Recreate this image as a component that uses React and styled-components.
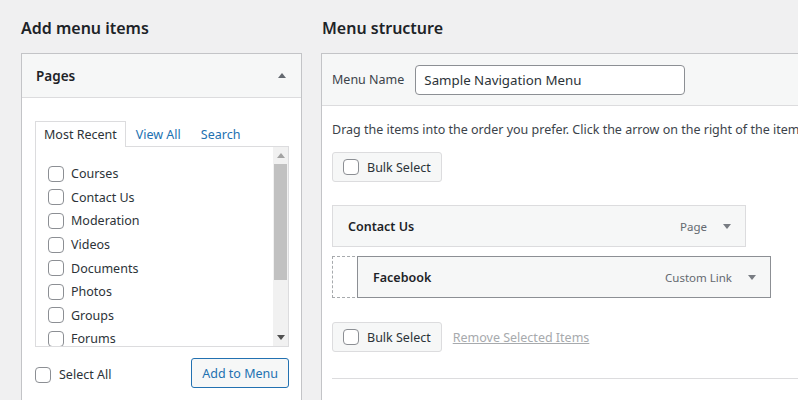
import styled, { createGlobalStyle } from 'styled-components';

const font = '"Noto Sans", "Open Sans", Arial, sans-serif';

const GlobalStyle = createGlobalStyle`
  html, body {
    margin: 0;
    background: #f0f0f1;
    overflow: hidden;
  }

  body {
    font-family: ${font};
    font-size: 12.5px;
    color: #3c434a;
  }

  #root {
    width: 1200px;
  }
`;

const Page = styled.div`
  display: flex;
  align-items: flex-start;
  gap: 19px;
  padding: 16px 0 0 21px;
`;

const Column = styled.section`
  width: ${(p) => p.width};
  flex-shrink: 0;
`;

const Heading = styled.h2`
  margin: 0 0 13px ${(p) => p.indent || '0'};
  font-size: 16px;
  line-height: 24px;
  font-weight: 600;
  color: #1d2327;
`;

const Box = styled.div`
  background: #fff;
  border: 1px solid #c3c4c7;
  height: ${(p) => p.height};
`;

const BoxHeader = styled.div`
  display: flex;
  align-items: center;
  justify-content: ${(p) => p.justify || 'space-between'};
  height: ${(p) => p.height};
  padding: 0 ${(p) => p.padRight} 0 ${(p) => p.padLeft};
  background: #f6f7f7;
  border-bottom: 1px solid #dcdcde;
`;

const BoxTitle = styled.h3`
  margin: 0;
  font-size: 13.5px;
  font-weight: 600;
  color: #1d2327;
`;

const Triangle = styled.span`
  width: 0;
  height: 0;
  border-left: ${(p) => p.size}px solid transparent;
  border-right: ${(p) => p.size}px solid transparent;
  ${(p) => (p.up ? 'border-bottom' : 'border-top')}: ${(p) => p.size + 1}px solid ${(p) => p.color || '#787c82'};
`;

const BoxBody = styled.div`
  padding: 23px 12px 0 13px;
`;

const Tabs = styled.div`
  display: flex;
  height: 25px;
`;

const Tab = styled.a`
  position: relative;
  z-index: 1;
  display: flex;
  align-items: center;
  margin-bottom: -1px;
  padding: 0 ${(p) => (p.active ? '8px' : '9px')};
  font-size: 12.5px;
  text-decoration: none;
  color: ${(p) => (p.active ? '#2c3338' : '#2271b1')};
  background: ${(p) => (p.active ? '#fff' : 'transparent')};
  border: 1px solid ${(p) => (p.active ? '#dcdcde' : 'transparent')};
  border-bottom: none;
`;

const ListPanel = styled.div`
  display: flex;
  height: 199px;
  border: 1px solid #dcdcde;
  overflow: hidden;
`;

const ListItems = styled.ul`
  flex: 1;
  margin: 0;
  padding: 15px 0 0 12px;
  list-style: none;
`;

const Row = styled.li`
  display: flex;
  align-items: center;
  gap: 7px;
  height: 23.6px;
  font-size: 12.5px;
  color: #2c3338;
`;

const Checkbox = styled.input.attrs({ type: 'checkbox' })`
  appearance: none;
  box-sizing: border-box;
  width: 16px;
  height: 16px;
  margin: 0;
  flex-shrink: 0;
  border: 1px solid #8c8f94;
  border-radius: 4px;
  background: #fff;
`;

const Scrollbar = styled.div`
  display: flex;
  flex-direction: column;
  align-items: center;
  width: 15px;
  background: #f1f1f1;
`;

const ScrollArrow = styled.div`
  display: flex;
  align-items: center;
  justify-content: center;
  height: 17px;
`;

const Thumb = styled.div`
  width: 13px;
  height: 116px;
  background: #c1c1c1;
`;

const Spacer = styled.div`
  flex: 1;
`;

const Footer = styled.div`
  display: flex;
  align-items: center;
  justify-content: space-between;
  margin-top: 11px;
`;

const CheckLabel = styled.label`
  display: flex;
  align-items: center;
  gap: 8px;
  padding-top: 3px;
  font-size: 12.5px;
  color: #2c3338;
`;

const Button = styled.button`
  display: inline-flex;
  align-items: center;
  gap: 8px;
  height: 30px;
  padding: 0 10px;
  font-family: ${font};
  font-size: 12.5px;
  border-radius: 3px;
  border: 1px solid ${(p) => (p.primary ? '#2271b1' : '#dcdcde')};
  color: ${(p) => (p.primary ? '#2271b1' : '#2c3338')};
  background: #f6f7f7;
`;

const NameLabel = styled.label`
  margin-right: 11px;
  font-size: 12.5px;
  color: #3c434a;
`;

const NameInput = styled.input`
  box-sizing: border-box;
  width: 270px;
  height: 30px;
  padding: 0 8px;
  border: 1px solid #8c8f94;
  border-radius: 4px;
  font-family: ${font};
  font-size: 13.3px;
  color: #2c3338;
  background: #fff;
`;

const StructureBody = styled.div`
  padding: 0 10px;
`;

const Description = styled.p`
  margin: 14px 0 12px;
  line-height: 20px;
  white-space: nowrap;
  font-size: 12.5px;
  color: #3c434a;
`;

const ItemSlot = styled.div`
  margin-top: 23px;
`;

const MenuItem = styled.div`
  box-sizing: border-box;
  display: flex;
  align-items: center;
  width: 414px;
  height: 42px;
  padding: 0 14px 0 15px;
  background: #f6f7f7;
  border: 1px solid ${(p) => (p.dragging ? '#8c8f94' : '#dcdcde')};
  ${(p) => p.dragging && 'position: absolute; top: 0; left: 25px;'}
`;

const ItemTitle = styled.span`
  flex: 1;
  font-size: 12.5px;
  font-weight: 600;
  color: #1d2327;
`;

const ItemType = styled.span`
  margin-right: 16px;
  font-size: 11.5px;
  color: #646970;
`;

const DropZone = styled.div`
  position: relative;
  height: 42px;
  margin-top: 9px;
`;

const Placeholder = styled.div`
  box-sizing: border-box;
  width: 414px;
  height: 42px;
  border: 1px dashed #a7aaad;
`;

const Actions = styled.div`
  display: flex;
  align-items: center;
  gap: 11px;
  margin-top: 24px;
`;

const DisabledLink = styled.a`
  font-size: 12.5px;
  color: #a7aaad;
  text-decoration: underline;
`;

const Divider = styled.hr`
  margin: 26px 0 0;
  border: 0;
  border-top: 1px solid #dcdcde;
`;

const pages = ['Courses', 'Contact Us', 'Moderation', 'Videos', 'Documents', 'Photos', 'Groups', 'Forums'];

export default function App() {
  return (
    <>
      <GlobalStyle />
      <Page>
        <Column width="281px">
          <Heading>Add menu items</Heading>
          <Box height="400px">
            <BoxHeader height="43px" padLeft="14px" padRight="15px">
              <BoxTitle>Pages</BoxTitle>
              <Triangle up size={4} color="#646970" />
            </BoxHeader>
            <BoxBody>
              <Tabs>
                <Tab active>Most Recent</Tab>
                <Tab>View All</Tab>
                <Tab>Search</Tab>
              </Tabs>
              <ListPanel>
                <ListItems>
                  {pages.map((page) => (
                    <Row key={page}>
                      <Checkbox />
                      {page}
                    </Row>
                  ))}
                </ListItems>
                <Scrollbar>
                  <ScrollArrow>
                    <Triangle up size={4} color="#a3a3a3" />
                  </ScrollArrow>
                  <Thumb />
                  <Spacer />
                  <ScrollArrow>
                    <Triangle size={4} color="#505050" />
                  </ScrollArrow>
                </Scrollbar>
              </ListPanel>
              <Footer>
                <CheckLabel>
                  <Checkbox />
                  Select All
                </CheckLabel>
                <Button primary>Add to Menu</Button>
              </Footer>
            </BoxBody>
          </Box>
        </Column>

        <Column width="860px">
          <Heading indent="1px">Menu structure</Heading>
          <Box height="400px">
            <BoxHeader height="51px" padLeft="10px" padRight="10px" justify="flex-start">
              <NameLabel>Menu Name</NameLabel>
              <NameInput defaultValue="Sample Navigation Menu" />
            </BoxHeader>
            <StructureBody>
              <Description>
                Drag the items into the order you prefer. Click the arrow on the right of the item to reveal additional configuration options.
              </Description>
              <Button>
                <Checkbox />
                Bulk Select
              </Button>
              <ItemSlot>
                <MenuItem>
                  <ItemTitle>Contact Us</ItemTitle>
                  <ItemType>Page</ItemType>
                  <Triangle size={4} />
                </MenuItem>
              </ItemSlot>
              <DropZone>
                <Placeholder />
                <MenuItem dragging>
                  <ItemTitle>Facebook</ItemTitle>
                  <ItemType>Custom Link</ItemType>
                  <Triangle size={4} />
                </MenuItem>
              </DropZone>
              <Actions>
                <Button>
                  <Checkbox />
                  Bulk Select
                </Button>
                <DisabledLink>Remove Selected Items</DisabledLink>
              </Actions>
              <Divider />
            </StructureBody>
          </Box>
        </Column>
      </Page>
    </>
  );
}
